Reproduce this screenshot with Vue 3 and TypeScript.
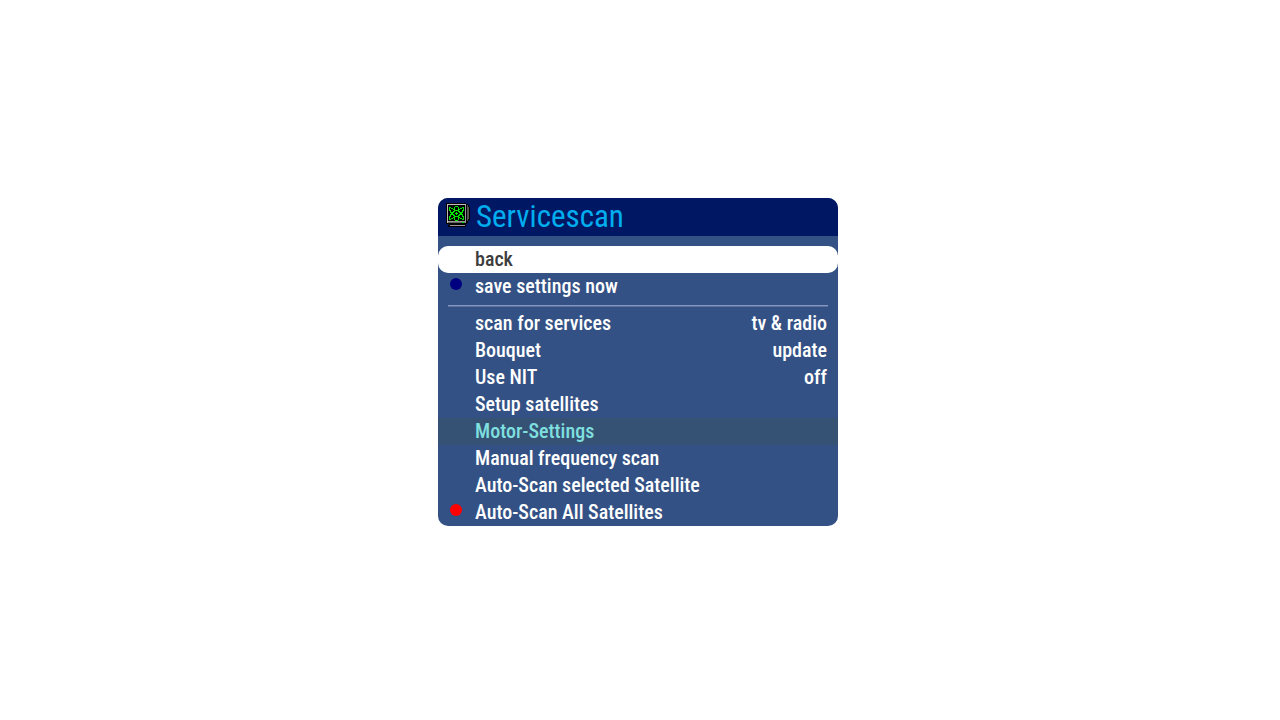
<script setup lang="ts">
interface MenuItem {
  label: string
  value?: string
  key?: 'blue' | 'red'
  state?: 'selected' | 'inactive'
}

const actions: MenuItem[] = [
  { label: 'back', state: 'selected' },
  { label: 'save settings now', key: 'blue' },
]

const settings: MenuItem[] = [
  { label: 'scan for services', value: 'tv & radio' },
  { label: 'Bouquet', value: 'update' },
  { label: 'Use NIT', value: 'off' },
  { label: 'Setup satellites' },
  { label: 'Motor-Settings', state: 'inactive' },
  { label: 'Manual frequency scan' },
  { label: 'Auto-Scan selected Satellite' },
  { label: 'Auto-Scan All Satellites', key: 'red' },
]

// Atom shown on the monitor: one character per pixel of the icon grid.
const atom = [
  '......###......',
  '##...#...#...##',
  '#.##.#...#.##.#',
  '#...##...##...#',
  '##...#####...##',
  '.#..##...##..#.',
  '.####..#..####.',
  '..##..###..##..',
  '.####..#..####.',
  '.#..##...##..#.',
  '##...#####...##',
  '#...##...##...#',
  '#.##.#...#.##.#',
  '##...#...#...##',
  '......###......',
]
const atomPath = atom
  .flatMap((row, y) => [...row].map((c, x) => (c === '#' ? `M${x + 3} ${y + 3}h1v1h-1z` : '')))
  .join('')
</script>

<template>
  <main class="screen">
    <section class="menu" aria-label="Servicescan">
      <header class="title-bar">
        <svg class="title-icon" viewBox="0 0 24 24" shape-rendering="crispEdges" aria-hidden="true">
          <path fill="#000" d="M0 0H20V1H22V2H23V4H24V17H23V18H22V20H21V21H20V24H2V22H3V21H0Z" />
          <path fill="#555" d="M21 2H22V4H23V16H22V18H21Z" />
          <path fill="#999" d="M1 1H20V20H1Z" />
          <path fill="#bbb" d="M1 1H20V2H2V20H1Z" />
          <path fill="#000" d="M2 2H19V18H2Z" />
          <path fill="#666" d="M2 19H19V20H2Z" />
          <path fill="#999" d="M4 22H19V23H4Z" />
          <path fill="#00e800" :d="atomPath" />
          <path fill="#00e800" d="M16 19H18V20H16Z" />
        </svg>
        <h1>Servicescan</h1>
      </header>
      <nav class="items">
        <button v-for="item in actions" :key="item.label" type="button" class="item" :class="item.state">
          <span class="mark"><span v-if="item.key" class="dot" :class="item.key"></span></span>
          <span class="label">{{ item.label }}</span>
        </button>
        <hr />
        <button v-for="item in settings" :key="item.label" type="button" class="item" :class="item.state">
          <span class="mark"><span v-if="item.key" class="dot" :class="item.key"></span></span>
          <span class="label">{{ item.label }}</span>
          <span v-if="item.value" class="value">{{ item.value }}</span>
        </button>
      </nav>
    </section>
  </main>
</template>

<style>
body {
  background: #fff;
}
</style>

<style scoped>
.screen {
  box-sizing: border-box;
  min-height: 100vh;
  padding: 4px 4px 0 0;
  display: flex;
  align-items: center;
  justify-content: center;
  font-family: "Liberation Sans Narrow", "Roboto Condensed", "Liberation Sans", sans-serif;
}
.menu {
  width: 100%;
  max-width: 400px;
  border-radius: 10px;
  overflow: hidden;
  background: #335184;
  color: #fff;
}
.title-bar {
  display: flex;
  align-items: center;
  gap: 6px;
  padding: 0 8px;
  background: #001763;
  color: #00aeef;
}
.title-icon {
  width: 24px;
  height: 24px;
  padding-bottom: 4px;
}
h1 {
  margin: 0;
  font-size: 31px;
  line-height: 38px;
  font-weight: 400;
}
.items {
  display: flex;
  flex-direction: column;
  padding-top: 10px;
}
.item {
  display: flex;
  align-items: center;
  border: 0;
  padding: 0 11px;
  background: none;
  color: inherit;
  font: inherit;
  font-size: 20px;
  font-weight: 500;
  line-height: 27px;
  text-align: left;
  border-radius: 10px;
}
.selected {
  background: #fff;
  color: #3c3c3c;
}
.inactive {
  background: #355275;
  color: #7fdfdf;
  border-radius: 0;
}
.mark {
  box-sizing: border-box;
  width: 26px;
  display: flex;
  padding: 0 0 5px 1px;
}
.dot {
  width: 12px;
  height: 12px;
  border-radius: 50%;
}
.blue {
  background: #000080;
}
.red {
  background: #f00;
}
.value {
  margin-left: auto;
}
hr {
  align-self: stretch;
  box-sizing: border-box;
  height: 2px;
  margin: 5px 10px 3px;
  border: 0;
  border-top: 1px solid #8598bc;
  border-bottom: 1px solid #5a719f;
}
</style>
